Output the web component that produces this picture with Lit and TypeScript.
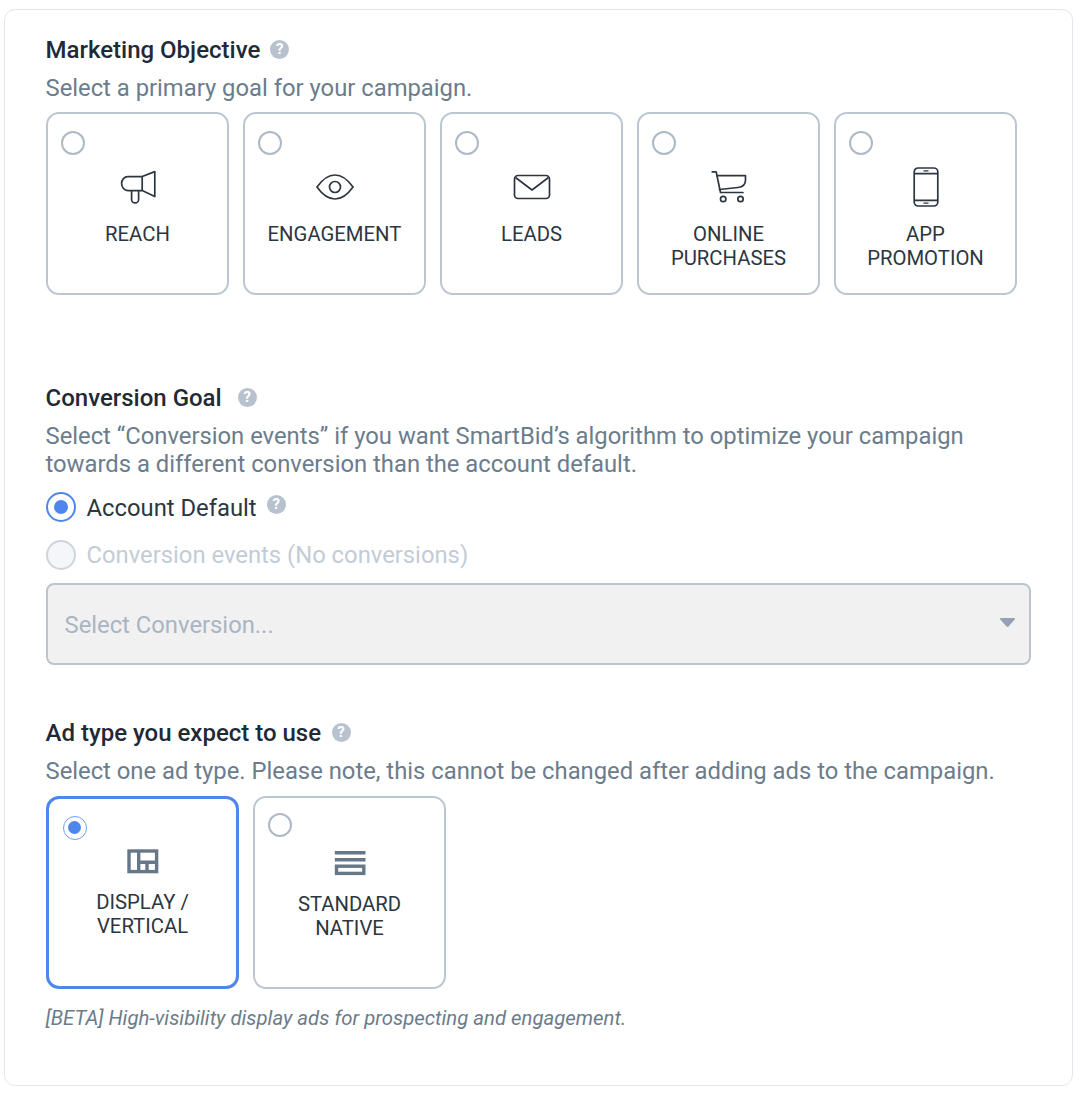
import { LitElement, html, css, svg } from "lit";
import { customElement } from "lit/decorators.js";

const ink = "#2c3640";
const slate = "#667788";

const icons = {
  reach: svg`<g fill="none" stroke=${ink} stroke-width="1.7" stroke-linejoin="round"><path d="M24.2 9.5 36.8 4.6V29.6L24.2 23.6Z"/><path d="M24.2 9.600H9.800a6.200 7 0 0 0 0 14H24.2"/><path d="M13.6 23.6V32.4a3.5 3.5 0 0 0 7 0V23.6"/></g>`,
  eye: svg`<g fill="none" stroke=${ink} stroke-width="1.7"><path d="M2 20C8 11.5 14 8 20 8s12 3.5 18 12c-6 8.5-12 12-18 12S8 28.5 2 20Z"/><circle cx="20" cy="20" r="5.5"/></g>`,
  mail: svg`<g fill="none" stroke=${ink} stroke-width="1.7" stroke-linejoin="round"><rect x="2.5" y="8.5" width="35" height="23" rx="3.5"/><path d="M3.500 10.500 20 23 36.500 10.500"/></g>`,
  cart: svg`<g fill="none" stroke=${ink} stroke-width="1.7" stroke-linecap="round" stroke-linejoin="round"><path d="M3.200 4.800H7.200L11.500 25.500H34"/><path d="M7.900 8.700H36.500V13C36.500 18 33 20 29 20.500L10.400 22.500"/><circle cx="14.200" cy="32" r="2.700"/><circle cx="31.500" cy="32" r="2.700"/></g>`,
  phone: svg`<g fill="none" stroke=${ink} stroke-width="1.7"><rect x="8.200" y="1" width="23.600" height="38" rx="4"/><path d="M8.200 6.600H31.800M8.200 33.400H31.800"/><path d="M17.500 3.900H22.500M17.500 36.200H22.500" stroke-width="1.300"/></g>`,
  layout: svg`<g fill="none" stroke=${slate} stroke-width="3.400"><rect x="6" y="10" width="27.600" height="20.600"/><path d="M15.700 10V30.600M15.700 21.300H33.600M24 21.300V30.600"/></g>`,
  lines: svg`<g fill="none" stroke=${slate} stroke-width="3.400"><path d="M4.800 9.700H35.500M4.800 16.700H35.500"/><rect x="6.500" y="23.200" width="27.300" height="7.200"/></g>`,
};

const objectives = [
  { icon: icons.reach, label: "REACH" },
  { icon: icons.eye, label: "ENGAGEMENT" },
  { icon: icons.mail, label: "LEADS" },
  { icon: icons.cart, label: "ONLINE PURCHASES" },
  { icon: icons.phone, label: "APP PROMOTION" },
];

@customElement("app-root")
export class AppRoot extends LitElement {
  static styles = css`
    :host {
      display: block;
      font-family: Roboto, "Liberation Sans", sans-serif;
      background: #fff;
    }
    .panel {
      box-sizing: border-box;
      width: 1069px;
      height: 1077px;
      margin: 9px 0 0 4px;
      padding: 25.500px 40.500px 0 40.500px;
      border: 1.500px solid #e3e6ec;
      border-radius: 11px;
    }
    .title {
      display: flex;
      align-items: center;
      height: 28px;
      font-size: 24px;
      font-weight: 500;
      color: #1f2a36;
    }
    .help {
      flex: none;
      display: inline-flex;
      align-items: center;
      justify-content: center;
      width: 19px;
      height: 19px;
      border-radius: 50%;
      background: #b8c2cf;
      color: #fff;
      font-size: 15px;
      font-weight: 700;
      line-height: 1;
    }
    .title .help { margin-left: 10px; }
    .title .help.wide { margin-left: 16px; }
    .title .help.mid { margin-left: 10.500px; }
    .sub {
      margin: 10px 0 0;
      font-size: 23.800px;
      line-height: 28px;
      color: #6b7c8c;
    }
    .cards {
      display: flex;
      gap: 14px;
      margin-top: 10px;
    }
    .card {
      box-sizing: border-box;
      display: flex;
      flex-direction: column;
      align-items: center;
      width: 183px;
      height: 183px;
      padding: 17px 13px 0 14px;
      border: 2px solid #bcc6d2;
      border-radius: 13px;
    }
    .radio {
      box-sizing: border-box;
      flex: none;
      align-self: flex-start;
      width: 24px;
      height: 24px;
      margin-left: -1px;
      border: 2px solid #aeb9c6;
      border-radius: 50%;
    }
    .card svg {
      flex: none;
      display: block;
      width: 40px;
      height: 40px;
      margin-top: 12px;
    }
    .label {
      margin-top: 15px;
      font-size: 20.300px;
      line-height: 24px;
      color: #2c3640;
      text-align: center;
    }
    .goal { margin-top: 89px; }
    .options {
      display: flex;
      flex-direction: column;
      gap: 18px;
      margin-top: 14px;
    }
    .option {
      display: flex;
      align-items: center;
      height: 30px;
      gap: 11px;
      font-size: 23.800px;
      color: #2c3640;
    }
    .option.off { color: #c3ccd6; }
    .option .text.low { padding-top: 2px; }
    .big {
      box-sizing: border-box;
      flex: none;
      display: flex;
      align-items: center;
      justify-content: center;
      width: 30px;
      height: 30px;
      border-radius: 50%;
      border: 2px solid #4f86ec;
      background: #fff;
    }
    .big::after {
      content: "";
      width: 14px;
      height: 14px;
      border-radius: 50%;
      background: #4f86ec;
    }
    .option.off .big {
      border-color: #cdd4dd;
      background: #f4f6f8;
    }
    .option.off .big::after { display: none; }
    .option .help { margin: -5px 0 0 -1px; }
    .select {
      box-sizing: border-box;
      display: flex;
      align-items: center;
      justify-content: space-between;
      height: 82px;
      width: 985px;
      margin-top: 13px;
      padding: 2px 14px 0 17px;
      background: #f1f1f2;
      border: 2px solid #bcc4d0;
      border-radius: 8px;
      font-size: 23.800px;
      color: #a9b5c2;
    }
    .arrow {
      width: 15px;
      height: 9px;
      margin-top: -4px;
      fill: #94a2b3;
    }
    .adtype { margin-top: 54px; }
    .cards.ads { margin-top: 11px; }
    .ads .card {
      width: 193px;
      height: 193px;
      padding-top: 15px;
    }
    .ads .card svg { margin-top: 6px; }
    .ads .label { margin-top: 9px; padding: 0 30px; }
    .ads .card.on {
      border: 3px solid #4f86ec;
      padding: 17px 14px 0 15px;
    }
    .ads .card.on svg { margin-top: 1px; }
    .radio.sel {
      display: flex;
      align-items: center;
      justify-content: center;
      border: 1.500px solid #6f9df0;
    }
    .radio.sel::after {
      content: "";
      width: 13px;
      height: 13px;
      border-radius: 50%;
      background: #4f86ec;
    }
    .note {
      margin: 17px 0 0;
      font-size: 20.350px;
      line-height: 24px;
      font-style: italic;
      color: #6b7c8c;
    }
  `;

  render() {
    return html`
      <div class="panel">
        <div class="title">Marketing Objective<span class="help">?</span></div>
        <p class="sub">Select a primary goal for your campaign.</p>
        <div class="cards">
          ${objectives.map(
            (o) => html`
              <div class="card">
                <span class="radio"></span>
                <svg viewBox="0 0 40 40">${o.icon}</svg>
                <div class="label">${o.label}</div>
              </div>
            `
          )}
        </div>

        <div class="title goal">Conversion Goal<span class="help wide">?</span></div>
        <p class="sub">Select “Conversion events” if you want SmartBid’s algorithm to optimize your campaign towards a different conversion than the account default.</p>
        <div class="options">
          <div class="option"><span class="big"></span><span class="text low">Account Default</span><span class="help">?</span></div>
          <div class="option off"><span class="big"></span><span class="text">Conversion events (No conversions)</span></div>
        </div>
        <div class="select">
          <span>Select Conversion...</span>
          <svg class="arrow" viewBox="0 0 15 9"><path d="M1 0H14C15 0 15.300 .8 14.700 1.500L8.500 8.500C8 9 7 9 6.500 8.500L.3 1.500C-.3 .8 0 0 1 0Z"/></svg>
        </div>

        <div class="title adtype">Ad type you expect to use<span class="help mid">?</span></div>
        <p class="sub">Select one ad type. Please note, this cannot be changed after adding ads to the campaign.</p>
        <div class="cards ads">
          <div class="card on">
            <span class="radio sel"></span>
            <svg viewBox="0 0 40 40">${icons.layout}</svg>
            <div class="label">DISPLAY / VERTICAL</div>
          </div>
          <div class="card">
            <span class="radio"></span>
            <svg viewBox="0 0 40 40">${icons.lines}</svg>
            <div class="label">STANDARD NATIVE</div>
          </div>
        </div>
        <p class="note">[BETA] High-visibility display ads for prospecting and engagement.</p>
      </div>
    `;
  }
}
